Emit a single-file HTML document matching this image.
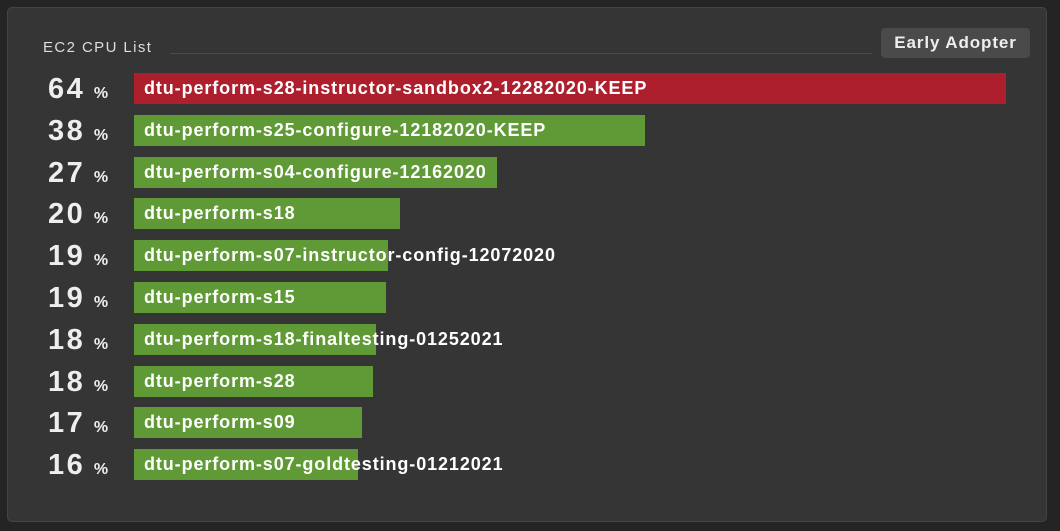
<html><head><style>
body{margin:0;background:#242424;width:1060px;height:531px;overflow:hidden;font-family:"Liberation Sans",sans-serif;}
.panel{position:absolute;left:7px;top:7px;width:1038px;height:513px;background:#353535;border:1px solid #444;border-radius:5px;}
.title{position:absolute;left:43px;top:39px;color:#ddd;font-size:15px;letter-spacing:1.4px;}
.line{position:absolute;left:170px;top:53px;width:702px;height:1px;background:#4a4a4a;}
.badge{position:absolute;left:881px;top:28px;width:149px;height:30px;background:#4a4a4a;border-radius:4px;color:#eee;font-size:17px;font-weight:bold;letter-spacing:0.9px;line-height:30px;text-align:center;}
.row{position:absolute;left:0;height:31px;width:1060px;}
.num{position:absolute;left:48px;top:1px;color:#eee;font-size:29px;line-height:31px;font-weight:bold;letter-spacing:2.5px;}
.num span{font-size:16px;font-weight:bold;letter-spacing:0;margin-left:-2px;}
.bar{position:absolute;left:134px;top:0;height:31px;background:#5f9a36;}
.lbl{position:absolute;left:144px;top:0;line-height:31px;color:#fff;font-size:18px;font-weight:bold;letter-spacing:0.9px;white-space:nowrap;}
</style></head><body>
<div class="panel"></div>
<div class="title">EC2 CPU List</div><div class="line"></div>
<div class="badge">Early Adopter</div>
<div class="row" style="top:73px"><div class="num">64 <span>%</span></div><div class="bar" style="width:872px;background:#ad1f2d"></div><div class="lbl">dtu-perform-s28-instructor-sandbox2-12282020-KEEP</div></div>
<div class="row" style="top:115px"><div class="num">38 <span>%</span></div><div class="bar" style="width:511px"></div><div class="lbl">dtu-perform-s25-configure-12182020-KEEP</div></div>
<div class="row" style="top:157px"><div class="num">27 <span>%</span></div><div class="bar" style="width:363px"></div><div class="lbl">dtu-perform-s04-configure-12162020</div></div>
<div class="row" style="top:198px"><div class="num">20 <span>%</span></div><div class="bar" style="width:266px"></div><div class="lbl">dtu-perform-s18</div></div>
<div class="row" style="top:240px"><div class="num">19 <span>%</span></div><div class="bar" style="width:254px"></div><div class="lbl">dtu-perform-s07-instructor-config-12072020</div></div>
<div class="row" style="top:282px"><div class="num">19 <span>%</span></div><div class="bar" style="width:252px"></div><div class="lbl">dtu-perform-s15</div></div>
<div class="row" style="top:324px"><div class="num">18 <span>%</span></div><div class="bar" style="width:242px"></div><div class="lbl">dtu-perform-s18-finaltesting-01252021</div></div>
<div class="row" style="top:366px"><div class="num">18 <span>%</span></div><div class="bar" style="width:239px"></div><div class="lbl">dtu-perform-s28</div></div>
<div class="row" style="top:407px"><div class="num">17 <span>%</span></div><div class="bar" style="width:228px"></div><div class="lbl">dtu-perform-s09</div></div>
<div class="row" style="top:449px"><div class="num">16 <span>%</span></div><div class="bar" style="width:224px"></div><div class="lbl">dtu-perform-s07-goldtesting-01212021</div></div>
</body></html>
